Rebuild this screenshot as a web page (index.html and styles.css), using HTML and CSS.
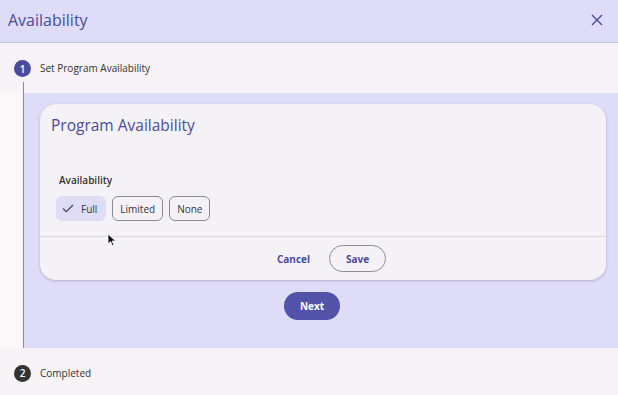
FILE: index.html
```html
<!DOCTYPE html>
<html>
<head>
<meta charset="utf-8">
<link rel="stylesheet" href="styles.css">
</head>
<body>
<div class="dialog">
  <header class="header">
    <h1 class="title">Availability</h1>
    <svg class="close" width="12" height="12" viewBox="0 0 12 12"><path d="M1 1L11 11M11 1L1 11" stroke="#4a4a9c" stroke-width="1.4" fill="none"/></svg>
  </header>

  <section class="step">
    <div class="step-head">
      <div class="marker">
        <span class="num active">1</span>
        <span class="line"></span>
      </div>
      <span class="step-label">Set Program Availability</span>
    </div>
    <div class="step-body">
      <div class="card">
        <h2 class="card-title">Program Availability</h2>
        <div class="field">
          <div class="field-label">Availability</div>
          <div class="chips">
            <button class="chip selected">
              <svg width="12" height="9" viewBox="0 0 12 9"><path d="M1 4.5L4.2 7.6L11 1" stroke="#44444c" stroke-width="1.2" fill="none"/></svg>
              Full
            </button>
            <button class="chip">Limited</button>
            <button class="chip">None</button>
          </div>
        </div>
        <div class="card-footer">
          <button class="text-btn">Cancel</button>
          <button class="outline-btn">Save</button>
        </div>
      </div>
      <div class="next-row">
        <button class="next-btn">Next</button>
      </div>
    </div>
  </section>

  <section class="step last">
    <div class="step-head2">
      <span class="num done">2</span>
      <span class="step-label">Completed</span>
    </div>
  </section>

  <svg class="cursor" width="10" height="15" viewBox="0 0 10 15"><path d="M1 1L1 11L3.6 8.6L5.4 13L7 12.3L5.2 8L8.6 8Z" fill="#111" stroke="#fff" stroke-width="0.8"/></svg>
</div>
</body>
</html>
```

FILE: styles.css
```css
* { box-sizing: border-box; }
html, body { margin: 0; padding: 0; }
body {
  width: 618px;
  height: 395px;
  overflow: hidden;
  background: #f6f2f6;
  font-family: "Open Sans", "Noto Sans", sans-serif;
  color: #333;
}
.dialog { position: relative; width: 618px; height: 395px; }
.header {
  height: 43px;
  background: #dfdcf8;
  border-bottom: 1px solid #c9c6dc;
  display: flex;
  align-items: center;
  justify-content: space-between;
  padding: 0 15px 0 8px;
}
.title {
  margin: 0;
  font-weight: 400;
  font-size: 16px;
  color: #4a4a9c;
  margin-top: -2px;
}
.close { margin-top: -3px; }

.step-head {
  height: 50px;
  display: flex;
  background: #f6f2f6;
}
.marker {
  width: 40px;
  padding: 17px 0 0 14px;
  display: flex;
  flex-direction: column;
}
.num {
  width: 17px;
  height: 17px;
  border-radius: 50%;
  color: #fff;
  font-size: 10px;
  font-weight: 600;
  display: flex;
  align-items: center;
  justify-content: center;
  flex: none;
}
.num.active { background: #4b4b9e; }
.num.done { background: #333336; }
.line {
  flex: 1;
  width: 1px;
  background: #8c8a98;
  margin: 5px 0 0 9px;
}
.step-label {
  font-size: 10px;
  color: #333;
  padding-top: 18px;
}
.step-body {
  height: 255px;
  background: linear-gradient(to right, #fcf7f8 0, #fcf7f8 23px, #8c8a98 23px, #8c8a98 24px, #dfdcf8 24px);
  padding: 11px 12px 0 40px;
}
.card {
  height: 176px;
  background: #f5f2f7;
  border-radius: 16px;
  box-shadow: 0 1px 3px rgba(60, 50, 90, 0.28);
  display: flex;
  flex-direction: column;
}
.card-title {
  margin: 0;
  padding: 11px 0 0 11px;
  font-weight: 400;
  font-size: 15.5px;
  line-height: 21px;
  color: #4a4a9c;
}
.field { padding: 37px 0 0 16px; }
.field-label {
  font-size: 10px;
  font-weight: 600;
  color: #333;
  padding-left: 3px;
}
.chips {
  display: flex;
  gap: 6px;
  margin-top: 9px;
}
.chip {
  font-family: inherit;
  height: 25px;
  border-radius: 6px;
  border: 1px solid #8d8992;
  background: transparent;
  font-size: 10px;
  font-weight: 500;
  color: #333;
  padding: 0 7px;
  display: flex;
  align-items: center;
  gap: 7px;
}
.chip.selected {
  background: #dfdcf6;
  border-color: #dfdcf6;
  padding: 0 8px 0 5px;
}
.card-footer {
  margin-top: auto;
  height: 44px;
  border-top: 1px solid #dcd8e0;
  display: flex;
  align-items: center;
  justify-content: center;
  gap: 7px;
  padding-left: 5px;
}
.text-btn {
  font-family: inherit;
  background: none;
  border: none;
  font-size: 10px;
  font-weight: 700;
  color: #4a4a9c;
  padding: 0 12px;
}
.outline-btn {
  font-family: inherit;
  height: 27px;
  width: 57px;
  border-radius: 14px;
  border: 1px solid #8d8992;
  background: transparent;
  font-size: 10px;
  font-weight: 700;
  color: #4a4a9c;
}
.next-row {
  display: flex;
  justify-content: center;
  padding-top: 12px;
  padding-right: 22px;
}
.next-btn {
  font-family: inherit;
  height: 28px;
  width: 56px;
  border-radius: 14px;
  border: none;
  background: #5152a8;
  color: #fff;
  font-size: 10px;
  font-weight: 700;
}
.step-head2 {
  height: 47px;
  display: flex;
  align-items: center;
  gap: 9px;
  padding: 3px 0 0 14px;
}
.step-head2 .step-label { padding-top: 0; }
.cursor { position: absolute; left: 107px; top: 233px; }
```
